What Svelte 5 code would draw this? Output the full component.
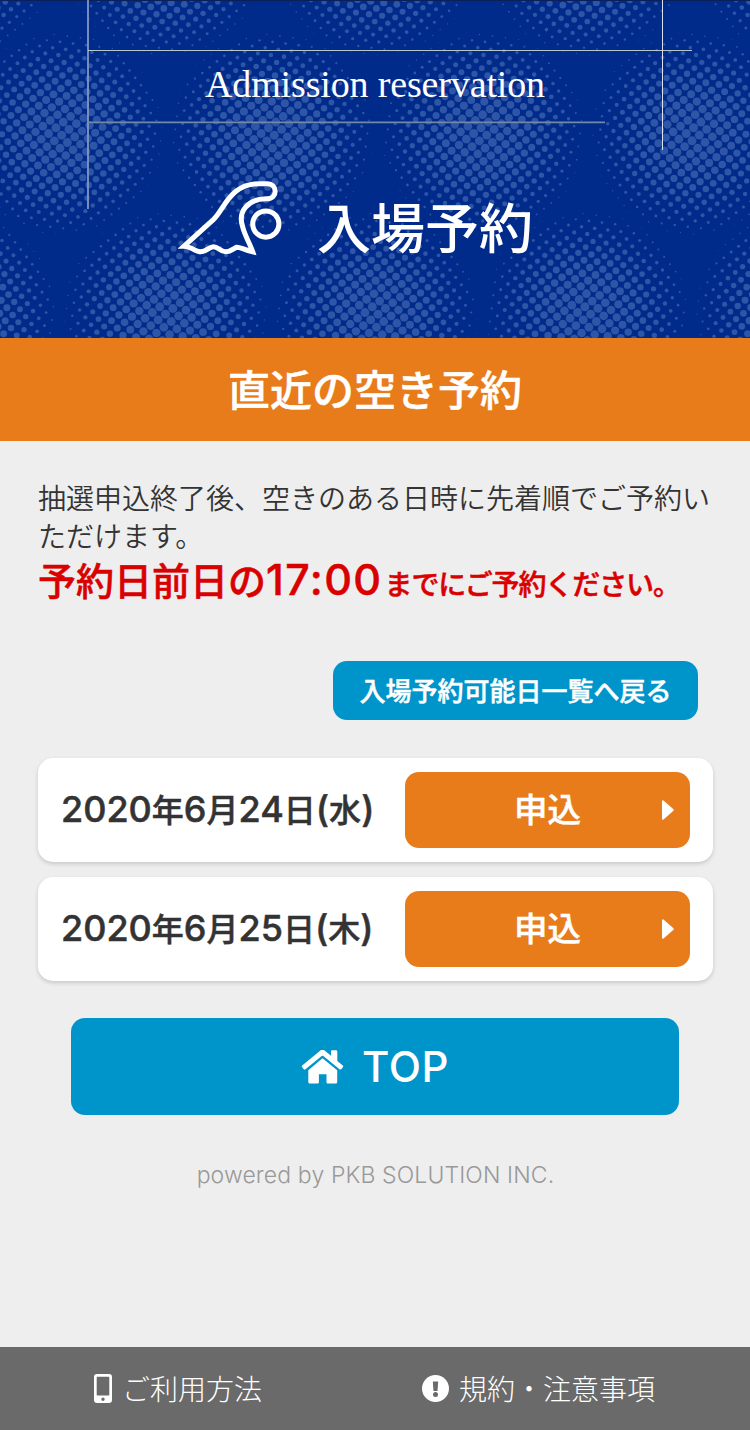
<script lang="ts">
    const days = [
        { day: 24, weekday: "水" },
        { day: 25, weekday: "木" },
    ];

    // halftone background: a tilted dot grid, dots shrink away from each blob centre
    const blobs: { x: number; y: number }[] = [];
    for (let row = 0; row < 3; row++) {
        for (let col = 0; col < 5; col++) {
            blobs.push({
                x: (row % 2 ? 61.5 : -45) + col * 210.6,
                y: -46 + row * 179.5,
            });
        }
    }

    function makeDots() {
        const dots: { x: number; y: number; r: number }[] = [];
        for (let i = -120; i < 120; i++) {
            for (let j = -120; j < 120; j++) {
                if ((i + j) % 2 !== 0) continue;
                const x = 157.3 + i * 6.54 - j * 0.817;
                const y = 273.3 + i * 0.817 + j * 6.54;
                if (x < -5 || x > 755 || y < -5 || y > 343) continue;
                const d = Math.min(
                    ...blobs.map((b) => Math.hypot(b.x - x, b.y - y)),
                );
                if (d > 102) continue;
                dots.push({
                    x,
                    y,
                    r: 4.5 * Math.pow(1 - Math.pow(d / 104, 1.8), 0.75),
                });
            }
        }
        return dots;
    }

    const dots = makeDots();
</script>

<div class="page">
    <header class="hero">
        <svg class="backdrop" viewBox="0 0 750 338" aria-hidden="true">
            <g fill="#2e55a6">
                {#each dots as dot}
                    <circle cx={dot.x} cy={dot.y} r={dot.r} />
                {/each}
            </g>
            <path d="M0 .5H750" stroke="#0a2058" />
            <path d="M88 0V209" stroke="#8497c4" stroke-width="1.8" />
            <path d="M88 50.5H692" stroke="#b5c6cc" />
            <path d="M88 122.3H605" stroke="#7388a5" stroke-width="1.7" />
            <path d="M662.5 0V150" stroke="#dbe2ef" />
        </svg>
        <p class="hero-en">Admission reservation</p>
        <div class="hero-title">
            <svg class="wave" width="105" height="77" viewBox="0 0 104 76">
                <g fill="none" stroke="#fff" stroke-width="5">
                    <path
                        d="M6 65.4 L35 39 C46 29 51 3.500 81 3.5 H88 C99 3.5 99 18.500 88 18.500 C69 18.500 59 31 64 46 C66 55 71 62 74 71 C65 69 61 66 58 66.500 C55 68 52 71 47 71 C42 71 40 66 35 66 C31 66 28 71 22 71 C17 71 13 65.400 6 65.400 Z"
                    />
                    <circle cx="87" cy="43.500" r="13" />
                </g>
            </svg>
            <h1>入場予約</h1>
        </div>
    </header>

    <h2>直近の空き予約</h2>

    <main>
        <p class="lead">
            抽選申込終了後、空きのある日時に先着順でご予約いただけます。
        </p>
        <p class="deadline">
            <span class="big">予約日前日の<span class="time">17:00</span></span
            >までにご予約ください。
        </p>

        <div class="back-row">
            <button class="back">入場予約可能日一覧へ戻る</button>
        </div>

        <ul>
            {#each days as { day, weekday }}
                <li>
                    <span class="date">
                        <b>2020</b>年<b>6</b>月<b>{day}</b>日<b>(</b
                        >{weekday}<b>)</b>
                    </span>
                    <button class="apply">
                        <span>申込</span>
                        <svg width="12" height="20" viewBox="0 0 12 20">
                            <path
                                d="M0 1.500Q0-.8 1.800.8L11.200 9Q12.200 10 11.200 11L1.800 19.200Q0 20.800 0 18.500Z"
                                fill="#fff"
                            />
                        </svg>
                    </button>
                </li>
            {/each}
        </ul>

        <button class="top">
            <svg width="43" height="34" viewBox="0 0 42 34" fill="#fff">
                <path
                    d="M18.300.9Q21-1.300 23.700.9L29.500 5.700V1.500Q29.500.3 30.700.3H34.600Q35.800.3 35.800 1.500V11L41.300 15.600Q42.100 16.400 41.400 17.300L39.700 19.200Q38.900 20 38 19.200L21.800 6Q21 5.400 20.200 6L4 19.200Q3.100 20 2.300 19.200L.6 17.300Q-.1 16.400.7 15.600Z"
                />
                <path
                    d="M21 8.300L35.700 20.300V32Q35.700 33.500 34.200 33.500H26.200Q25 33.500 25 32.300V24.200H17.400V32.300Q17.400 33.500 16.200 33.500H8.300Q6.800 33.500 6.800 32V20.300Z"
                />
            </svg>
            TOP
        </button>

        <p class="powered">powered by PKB SOLUTION INC.</p>
    </main>

    <footer>
        <a href="#guide">
            <svg width="18" height="29" viewBox="0 0 18 29">
                <path
                    fill="#fff"
                    fill-rule="evenodd"
                    d="M3 0H15Q18 0 18 3V26Q18 29 15 29H3Q0 29 0 26V3Q0 0 3 0ZM3.600 2.800Q2.700 2.800 2.700 3.700V20.700Q2.700 21.600 3.600 21.600H14.400Q15.300 21.600 15.300 20.700V3.700Q15.300 2.800 14.400 2.800ZM9 23.500A1.700 1.700 0 1 0 9 26.900A1.700 1.700 0 1 0 9 23.500Z"
                />
            </svg>
            <span>ご利用方法</span>
        </a>
        <a href="#terms">
            <svg width="27" height="27" viewBox="0 0 27 27">
                <circle cx="13.500" cy="13.500" r="13.500" fill="#fff" />
                <path d="M10.800 6.500H16.200L15.500 16H11.500Z" fill="#6a6a6a" />
                <circle cx="13.500" cy="19.400" r="2.500" fill="#6a6a6a" />
            </svg>
            <span>規約・注意事項</span>
        </a>
    </footer>
</div>

<style>
    :global(body) {
        margin: 0;
        background: #eee;
    }

    .page {
        width: 750px;
        height: 1430px;
        display: flex;
        flex-direction: column;
        background: #eee;
        color: #333;
        font-family: "Noto Sans CJK JP", sans-serif;
        overflow: hidden;
    }

    h1,
    h2,
    p,
    ul {
        margin: 0;
        padding: 0;
    }

    button {
        border: 0;
        padding: 0;
        color: #fff;
        font-family: inherit;
        font-weight: 500;
        border-radius: 14px;
        background: #0095ca;
    }

    /* semi-bold: sits between the medium and bold cuts */
    h2,
    .deadline,
    .back,
    .date,
    .apply {
        font-weight: 500;
        -webkit-text-stroke: 0.5px currentColor;
    }

    .hero {
        position: relative;
        height: 338px;
        flex: none;
        background: #002b8a;
        color: #fff;
    }

    .backdrop {
        position: absolute;
        inset: 0;
        width: 750px;
        height: 338px;
    }

    .hero-en {
        position: relative;
        padding-top: 62px;
        font: 38px/44px "Liberation Serif", serif;
        letter-spacing: -0.15px;
        text-align: center;
    }

    .hero-title {
        position: relative;
        display: flex;
        padding: 74px 0 0 178px;
    }

    h1 {
        margin: 10px 0 0 34px;
        font-size: 54px;
        line-height: 72px;
        font-weight: 500;
    }

    h2 {
        height: 103px;
        flex: none;
        background: #e87b1a;
        color: #fff;
        font-size: 42px;
        line-height: 99px;
        text-align: center;
    }

    main {
        flex: 1;
        padding: 37px 37px 0 38px;
    }

    .lead {
        font-size: 28px;
        line-height: 38px;
        font-weight: 350;
    }

    .deadline {
        color: #d90000;
        font-size: 28px;
        line-height: 50px;
        letter-spacing: -1.1px;
        white-space: nowrap;
    }

    .big {
        font-size: 38px;
        letter-spacing: 0;
    }

    .time {
        margin-right: 2px;
        font: 500 43px/50px Inter, sans-serif;
        letter-spacing: 1.4px;
    }

    .back-row {
        display: flex;
        justify-content: flex-end;
        padding: 53px 15px 0 0;
    }

    .back {
        width: 365px;
        height: 59px;
        padding-bottom: 2px;
        font-size: 26px;
    }

    ul {
        display: flex;
        flex-direction: column;
        gap: 15px;
        margin-top: 38px;
        list-style: none;
    }

    li {
        display: flex;
        align-items: center;
        justify-content: space-between;
        height: 104px;
        box-sizing: border-box;
        padding: 0 23px;
        border-radius: 15px;
        background: #fff;
        box-shadow: 0 2px 4px rgba(0, 0, 0, 0.16);
    }

    .date {
        padding-bottom: 5px;
        font-size: 32px;
        line-height: 48px;
        white-space: nowrap;
    }

    .date b {
        font: 500 36px/1 Inter, sans-serif;
    }

    .apply {
        display: grid;
        grid-template-columns: 1fr auto 1fr;
        align-items: center;
        width: 285px;
        height: 76px;
        background: #e87b1a;
        font-size: 33.5px;
    }

    .apply::before {
        content: "";
    }

    .apply span {
        padding-bottom: 6px;
    }

    .apply svg {
        justify-self: end;
        margin-right: 16px;
    }

    .top {
        display: flex;
        align-items: center;
        justify-content: center;
        gap: 18px;
        width: 608px;
        height: 97px;
        margin: 37px 0 0 33px;
        font: 500 42px Inter, sans-serif;
        letter-spacing: 0.5px;
    }

    .powered {
        margin-top: 42px;
        color: #999;
        font: 300 23px/36px Inter, sans-serif;
        letter-spacing: 0.12px;
        text-align: center;
    }

    footer {
        display: grid;
        grid-template-columns: 1fr 1fr;
        height: 83px;
        flex: none;
        background: #6a6a6a;
    }

    footer a {
        display: flex;
        align-items: center;
        gap: 10px;
        padding: 0 0 0 94px;
        color: #fff;
        font-size: 28px;
        font-weight: 300;
        text-decoration: none;
    }

    footer a + a {
        padding-left: 47px;
    }

    footer span {
        padding-bottom: 1px;
    }
</style>
